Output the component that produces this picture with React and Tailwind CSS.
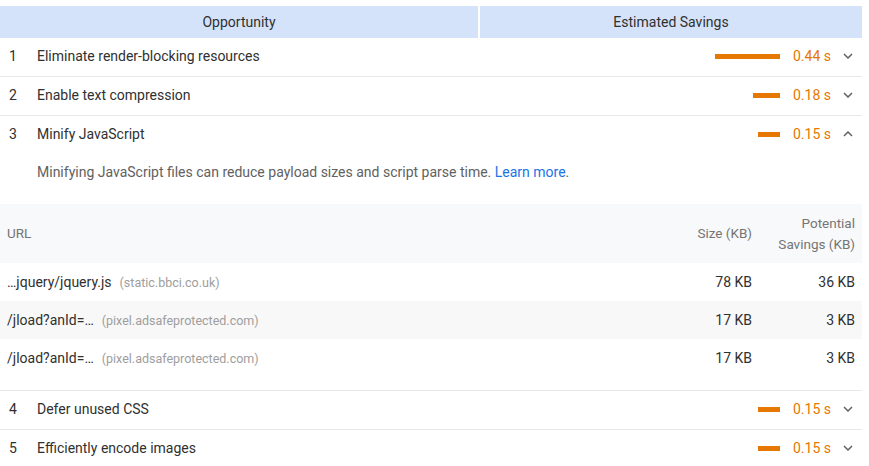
import React from 'react';

const ORANGE = 'text-[#e67700]';

// Audit rows shown in the opportunity list
const audits = [
    { n: 1, title: 'Eliminate render-blocking resources', bar: 65, value: '0.44 s' },
    { n: 2, title: 'Enable text compression', bar: 27, value: '0.18 s' },
    { n: 3, title: 'Minify JavaScript', bar: 22, value: '0.15 s', open: true },
    { n: 4, title: 'Defer unused CSS', bar: 22, value: '0.15 s' },
    { n: 5, title: 'Efficiently encode images', bar: 22, value: '0.15 s' },
];

const files = [
    { url: '…jquery/jquery.js', host: '(static.bbci.co.uk)', size: '78 KB', savings: '36 KB' },
    { url: '/jload?anId=…', host: '(pixel.adsafeprotected.com)', size: '17 KB', savings: '3 KB' },
    { url: '/jload?anId=…', host: '(pixel.adsafeprotected.com)', size: '17 KB', savings: '3 KB' },
];

const Chevron = ({ up }) => (
    <svg width="10" height="6" viewBox="0 0 10 6" className="ml-[12px] mr-[9px] shrink-0">
        <polyline
            points={up ? '1,5 5,1 9,5' : '1,1 5,5 9,1'}
            fill="none"
            stroke="#616161"
            strokeWidth="1.5"
        />
    </svg>
);

const AuditHeader = ({ audit }) => (
    <div className="flex items-center h-[38px] pb-[2px]">
        <span className="w-[37px] pl-[9px] text-[#303030]">{audit.n}</span>
        <span className="flex-1 text-[#303030]">{audit.title}</span>
        <span className="h-[5px] bg-[#e67700]" style={{ width: audit.bar }} />
        <span className={`ml-[13px] ${ORANGE}`}>{audit.value}</span>
        <Chevron up={audit.open} />
    </div>
);

const FileTable = () => (
    <div className="text-[14px]">
        <div className="flex items-center h-[59px] bg-[#f8f9fa] text-[#757575] text-[13.5px]">
            <span className="flex-1 pl-[7px]">URL</span>
            <span className="w-[120px] text-right">Size (KB)</span>
            <span className="w-[110px] pr-[7px] text-right leading-[21px]">Potential<br />Savings (KB)</span>
        </div>
        {files.map((f, i) => (
            <div key={i} className={`flex items-center h-[38px] pt-[1px] ${i === 1 ? 'bg-[#f8f8f8]' : ''}`}>
                <span className="flex-1 pl-[7px] text-[#303030]">
                    {f.url}
                    <span className="ml-[8px] text-[12.5px] text-[#9e9e9e]">{f.host}</span>
                </span>
                <span className="w-[120px] text-right text-[#303030]">{f.size}</span>
                <span className="w-[110px] pr-[7px] text-right text-[#303030]">{f.savings}</span>
            </div>
        ))}
    </div>
);

export default function App() {
    return (
        <div className="bg-white pt-[6px] pr-[7px] w-[869px] h-[466px] overflow-hidden text-[14px]" style={{ fontFamily: 'Roboto, "Liberation Sans", sans-serif' }}>
            {/* column header */}
            <div className="flex h-[32px] text-[#303030]">
                <div className="w-[478px] bg-[#d5e3fa] flex items-center justify-center">Opportunity</div>
                <div className="flex-1 ml-[2px] bg-[#d5e3fa] flex items-center justify-center">Estimated Savings</div>
            </div>

            {audits.map(a => (
                <div key={a.n} className="border-b border-[#e8e8e8]">
                    <AuditHeader audit={a} />
                    {a.open && (
                        <div className="pb-[13px]">
                            <p className="pl-[37px] pt-[8px] pb-[22px] text-[#616161] leading-[20px]">
                                Minifying JavaScript files can reduce payload sizes and script parse time.{' '}
                                <a className="text-[#1a73e8]">Learn more</a>.
                            </p>
                            <FileTable />
                        </div>
                    )}
                </div>
            ))}
        </div>
    );
}
